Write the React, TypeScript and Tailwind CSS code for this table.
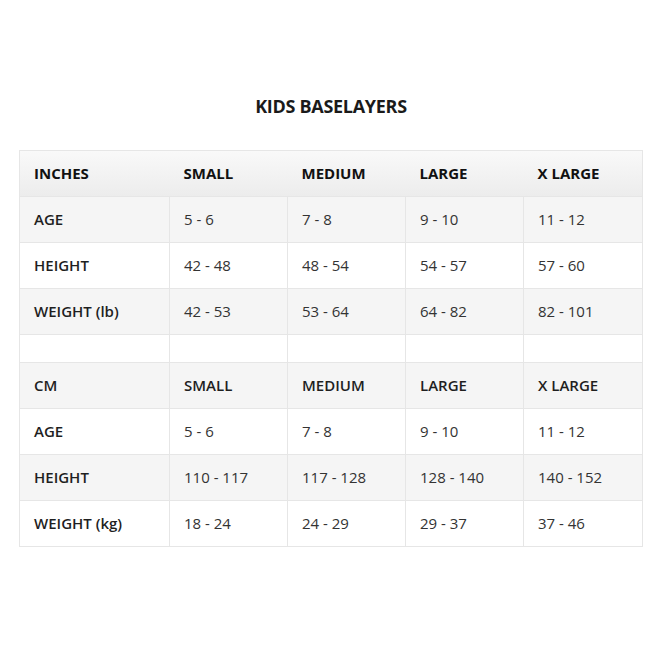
const sizes = ['SMALL', 'MEDIUM', 'LARGE', 'X LARGE'];

const inches = [
  ['AGE', '5 - 6', '7 - 8', '9 - 10', '11 - 12'],
  ['HEIGHT', '42 - 48', '48 - 54', '54 - 57', '57 - 60'],
  ['WEIGHT (lb)', '42 - 53', '53 - 64', '64 - 82', '82 - 101'],
];

const cm = [
  ['AGE', '5 - 6', '7 - 8', '9 - 10', '11 - 12'],
  ['HEIGHT', '110 - 117', '117 - 128', '128 - 140', '140 - 152'],
  ['WEIGHT (kg)', '18 - 24', '24 - 29', '29 - 37', '37 - 46'],
];

const cell = 'border border-[#e6e6e6] px-[14px] text-left align-middle';

function DataRow({ row, shaded }: { row: string[]; shaded: boolean }) {
  return (
    <tr className={`h-[46px] ${shaded ? 'bg-[#f5f5f5]' : 'bg-white'}`}>
      {row.map((v, i) => (
        <td key={i} className={`${cell} ${i === 0 ? 'font-semibold text-[#1f1f1f]' : 'text-[#333]'}`}>
          {v}
        </td>
      ))}
    </tr>
  );
}

export default function App() {
  return (
    <div className="w-[650px] h-[650px] bg-white font-['Open_Sans',sans-serif] text-[15px]">
      <h1 className="pt-[93px] pl-[12px] text-center text-[18px] font-bold tracking-[-0.3px] text-[#1a1a1a]">
        KIDS BASELAYERS
      </h1>

      <table className="mt-[30px] ml-[19px] w-[623px] table-fixed border-collapse">
        <colgroup>
          <col className="w-[150px]" />
          <col className="w-[118px]" />
          <col className="w-[118px]" />
          <col className="w-[118px]" />
          <col className="w-[119px]" />
        </colgroup>
        <tbody>
          {/* Inches header */}
          <tr className="h-[46px] bg-gradient-to-b from-[#f9f9f9] to-[#ececec]">
            {['INCHES', ...sizes].map((v) => (
              <th key={v} className={`${cell} border-x-0 first:border-l last:border-r font-bold text-[#111]`}>
                {v}
              </th>
            ))}
          </tr>
          {inches.map((r, i) => (
            <DataRow key={'in' + i} row={r} shaded={i % 2 === 0} />
          ))}

          {/* spacer row */}
          <tr className="h-[28px] bg-white">
            {[0, 1, 2, 3, 4].map((i) => (
              <td key={i} className={cell} />
            ))}
          </tr>

          {/* Centimetres header */}
          <tr className="h-[46px] bg-[#f5f5f5]">
            {['CM', ...sizes].map((v) => (
              <td key={v} className={`${cell} font-semibold text-[#1f1f1f]`}>
                {v}
              </td>
            ))}
          </tr>
          {cm.map((r, i) => (
            <DataRow key={'cm' + i} row={r} shaded={i % 2 === 1} />
          ))}
        </tbody>
      </table>
    </div>
  );
}
